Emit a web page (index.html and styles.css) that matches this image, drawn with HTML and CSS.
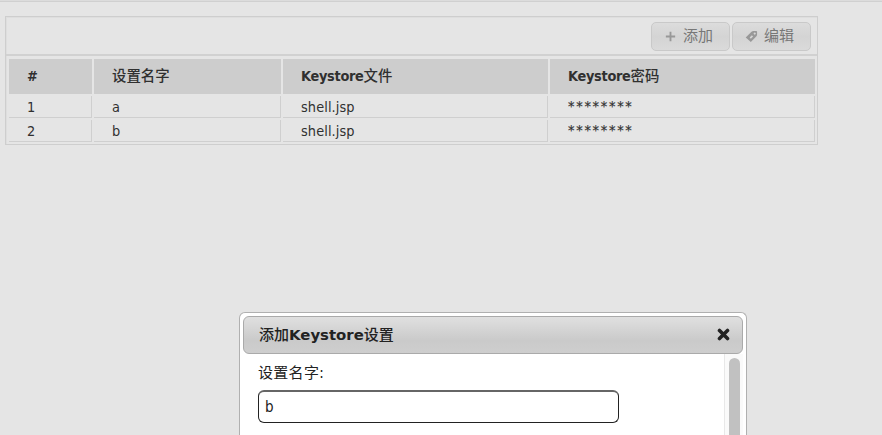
FILE: index.html
```html
<!DOCTYPE html>
<html lang="zh-CN">
<head>
<meta charset="utf-8">
<title>Keystore设置</title>
<link rel="stylesheet" href="styles.css">
</head>
<body>
<main class="panel">
  <div class="toolbar">
    <button class="tool" type="button">
      <svg class="tool-icon" viewBox="0 0 14 14"><path d="M7 2v10M2 7h10" fill="none" stroke="currentColor" stroke-width="2"/></svg><span>添加</span>
    </button>
    <button class="tool" type="button">
      <svg class="tool-icon" viewBox="0 0 14 14"><path fill="currentColor" fill-rule="evenodd" d="M.8 8 7 2Q8 1 9 1H12Q13 1 13 2V5.2Q13 6 12.3 6.7L6.3 12.8ZM10.4 2.6a1.1 1.1 0 1 0 .1 0ZM5 8 6.3 9.3 8.7 6.9 7.4 5.6Z"/></svg><span>编辑</span>
    </button>
  </div>
  <div class="grid">
    <div class="head">#</div><div class="head">设置名字</div><div class="head"><span>Keystore</span>文件</div><div class="head"><span>Keystore</span>密码</div>
    <div class="cell">1</div><div class="cell">a</div><div class="cell">shell.jsp</div><div class="cell stars">********</div>
    <div class="cell">2</div><div class="cell">b</div><div class="cell">shell.jsp</div><div class="cell stars">********</div>
  </div>
</main>
<section class="dialog">
  <header class="titlebar">
    <h1 class="title">添加<b>Keystore</b>设置</h1>
    <svg class="close" viewBox="0 0 12 12"><path d="M2.3 2.3 9.7 9.7M9.7 2.3 2.3 9.7" stroke="currentColor" stroke-width="3.3" stroke-linecap="round"/></svg>
  </header>
  <div class="content">
    <div class="form">
      <label class="label" for="name">设置名字:</label>
      <input class="field" id="name" value="b">
    </div>
    <div class="scroll"><div class="thumb"></div></div>
  </div>
</section>
</body>
</html>
```
FILE: styles.css
```css
* { box-sizing: border-box; }
html { overflow: hidden; }
body {
  margin: 0;
  height: 435px;
  overflow: hidden;
  position: relative;
  background: #e5e5e5;
  border-top: 1px solid #dcdcdc;
  box-shadow: inset 0 1px #d0d0d0;
  padding: 15px 0 0 5px;
  color: #303030;
  font: 14.4px "DejaVu Sans Condensed", "DejaVu Sans", "Noto Sans CJK SC", sans-serif;
}
.panel {
  width: 813px;
  height: 129px;
  border: 1px solid #cecece;
  box-shadow: inset 1px 1px #dedede;
}
.toolbar {
  height: 39px;
  display: flex;
  justify-content: flex-end;
  gap: 2px;
  padding: 5px 6px 0 0;
  border-bottom: 2px solid #d1d1d1;
}
.tool {
  width: 79px;
  height: 29px;
  display: flex;
  align-items: center;
  padding: 0 0 5px 12px;
  gap: 6px;
  border: 1px solid #c9c9c9;
  border-radius: 5px;
  background: linear-gradient(#dcdcdc, #d4d4d4 50%, #dadada);
  color: #777;
  font: 15px "Noto Sans CJK SC", sans-serif;
}
.tool-icon { width: 13px; height: 13px; color: #989898; position: relative; top: 2px; }
.grid {
  display: grid;
  grid-template-columns: 83px 187px 265px 265px;
  grid-template-rows: 35px 22px 22px;
  gap: 2px;
  padding: 3px 0 0 3px;
}
.head {
  background: #cdcdcd;
  padding-left: 18px;
  line-height: 35px;
  white-space: nowrap;
  font-weight: 500;
}
.head:first-child { font-weight: 700; }
.head span { font-weight: 700; letter-spacing: -.3px; }
.cell {
  padding-left: 18px;
  line-height: 22px;
  border: solid #cfcfcf;
  border-width: 0 1px 1px 0;
  letter-spacing: .1px;
}
.stars { letter-spacing: 1.72px; line-height: 21px; -webkit-text-stroke: .15px currentColor; }
.dialog {
  position: absolute;
  left: 239px;
  top: 311px;
  width: 508px;
  height: 123px;
  padding: 3px 3px 0;
  border: 1px solid #b0b0b0;
  border-bottom: 0;
  border-radius: 6px 6px 0 0;
  background: #fff;
  color: #222;
}
.titlebar {
  height: 38px;
  display: flex;
  align-items: center;
  justify-content: space-between;
  padding: 0 12px 1px 15px;
  border: 1px solid #aaa;
  border-radius: 6px;
  background: linear-gradient(#e0e0e0, #cacaca 65%, #cecece);
}
.title { margin: 0; font: 500 15px/34px "Noto Sans CJK SC", sans-serif; position: relative; top: -1px; }
.title b { font: 700 14.9px "DejaVu Sans", sans-serif; }
.close { width: 13px; height: 13px; color: #222; }
.content { display: flex; justify-content: space-between; height: 81px; overflow: hidden; }
.form { padding: 8px 0 0 15px; }
.label { display: block; height: 28px; line-height: 22px; font-size: 15px; letter-spacing: .3px; }
.field {
  display: block;
  width: 361px;
  height: 33px;
  padding: 0 6px;
  border: 1px solid #222;
  border-top: 2px solid #666;
  border-radius: 6px;
  background: #fff;
  color: #222;
  font: 15px "DejaVu Sans Condensed", "DejaVu Sans", sans-serif;
  outline: 0;
}
.scroll { width: 19px; padding: 4px 4px 0; background: #fafafa; border-left: 1px solid #e8e8e8; }
.thumb { width: 11px; height: 77px; border-radius: 6px 6px 0 0; background: #c1c1c1; }
```
